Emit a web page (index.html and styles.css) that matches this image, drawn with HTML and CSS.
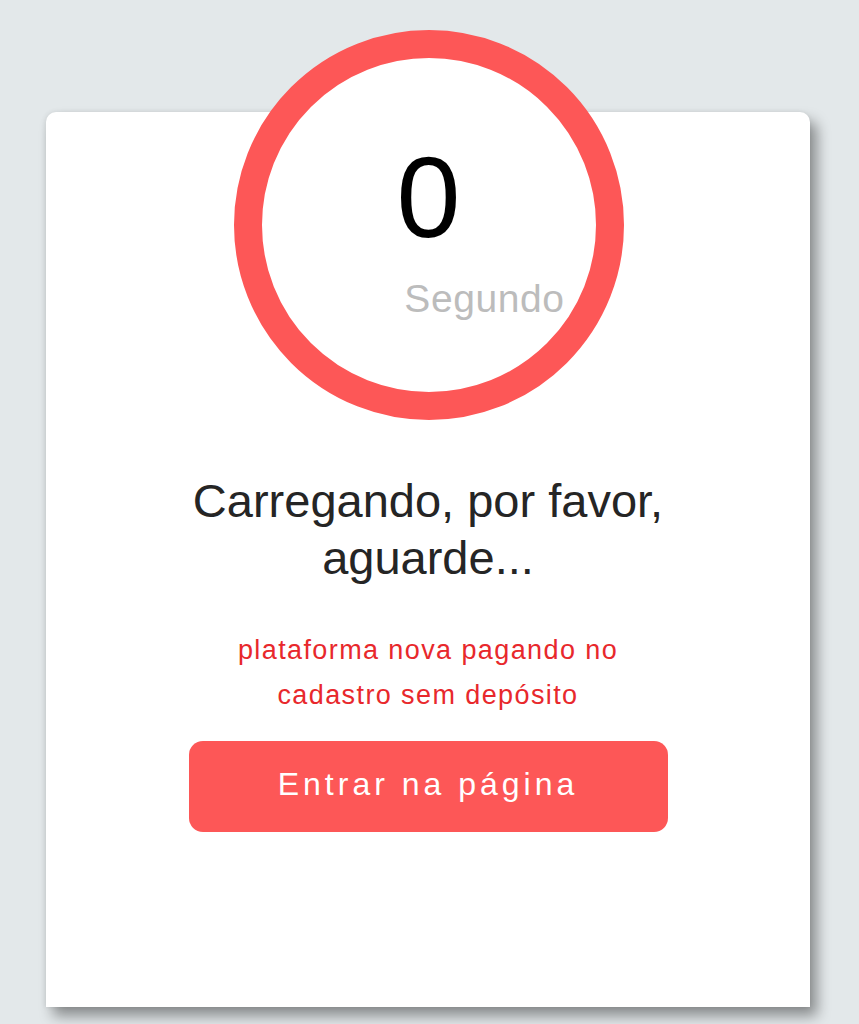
FILE: index.html
```html
<!DOCTYPE html>
<html lang="pt">
<head>
<meta charset="utf-8">
<title>Carregando</title>
<link rel="stylesheet" href="styles.css">
</head>
<body>
<main class="card">
  <div class="timer">
    <div class="count">0</div>
    <div class="unit">Segundo</div>
  </div>
  <h1 class="title">Carregando, por favor,<br>aguarde...</h1>
  <p class="promo">plataforma nova pagando no<br>cadastro sem depósito</p>
  <button class="enter" type="button">Entrar na página</button>
</main>
</body>
</html>
```
FILE: styles.css
```css
html, body {
  margin: 0;
  padding: 0;
}
body {
  background: #e3e8ea;
  font-family: "Liberation Sans", Arial, sans-serif;
  height: 1024px;
  overflow: hidden;
}
.card {
  box-sizing: border-box;
  width: 764px;
  height: 895px;
  margin: 112px 0 0 46px;
  background: #fff;
  border-radius: 10px 10px 0 0;
  box-shadow: 7px 9px 14px rgba(0, 0, 0, 0.4), -1px 0 5px rgba(0, 0, 0, 0.08);
  display: flex;
  flex-direction: column;
  align-items: center;
}
.timer {
  box-sizing: border-box;
  width: 390px;
  height: 390px;
  margin-top: -82px;
  border: 28px solid #fd5757;
  border-radius: 50%;
  background: #fff;
  display: flex;
  flex-direction: column;
  align-items: center;
  padding-top: 82px;
  margin-left: 1px;
}
.count {
  font-size: 115px;
  line-height: 115px;
  color: #000;
}
.unit {
  margin-top: 22px;
  margin-left: 112px;
  font-size: 39px;
  line-height: 44px;
  letter-spacing: 0.6px;
  color: #bcbcbc;
}
.title {
  margin: 52px 0 0;
  font-size: 47px;
  line-height: 57px;
  font-weight: normal;
  color: #252525;
  text-align: center;
}
.promo {
  margin: 42px 0 0;
  font-size: 27px;
  line-height: 45px;
  letter-spacing: 1.4px;
  color: #e8282c;
  text-align: center;
}
.enter {
  margin-top: 23px;
  width: 479px;
  height: 91px;
  border: none;
  border-radius: 14px;
  background: #fd5757;
  color: #fff;
  font-family: "Liberation Sans", Arial, sans-serif;
  font-size: 32px;
  letter-spacing: 4px;
  padding: 0 0 4px;
}
```
